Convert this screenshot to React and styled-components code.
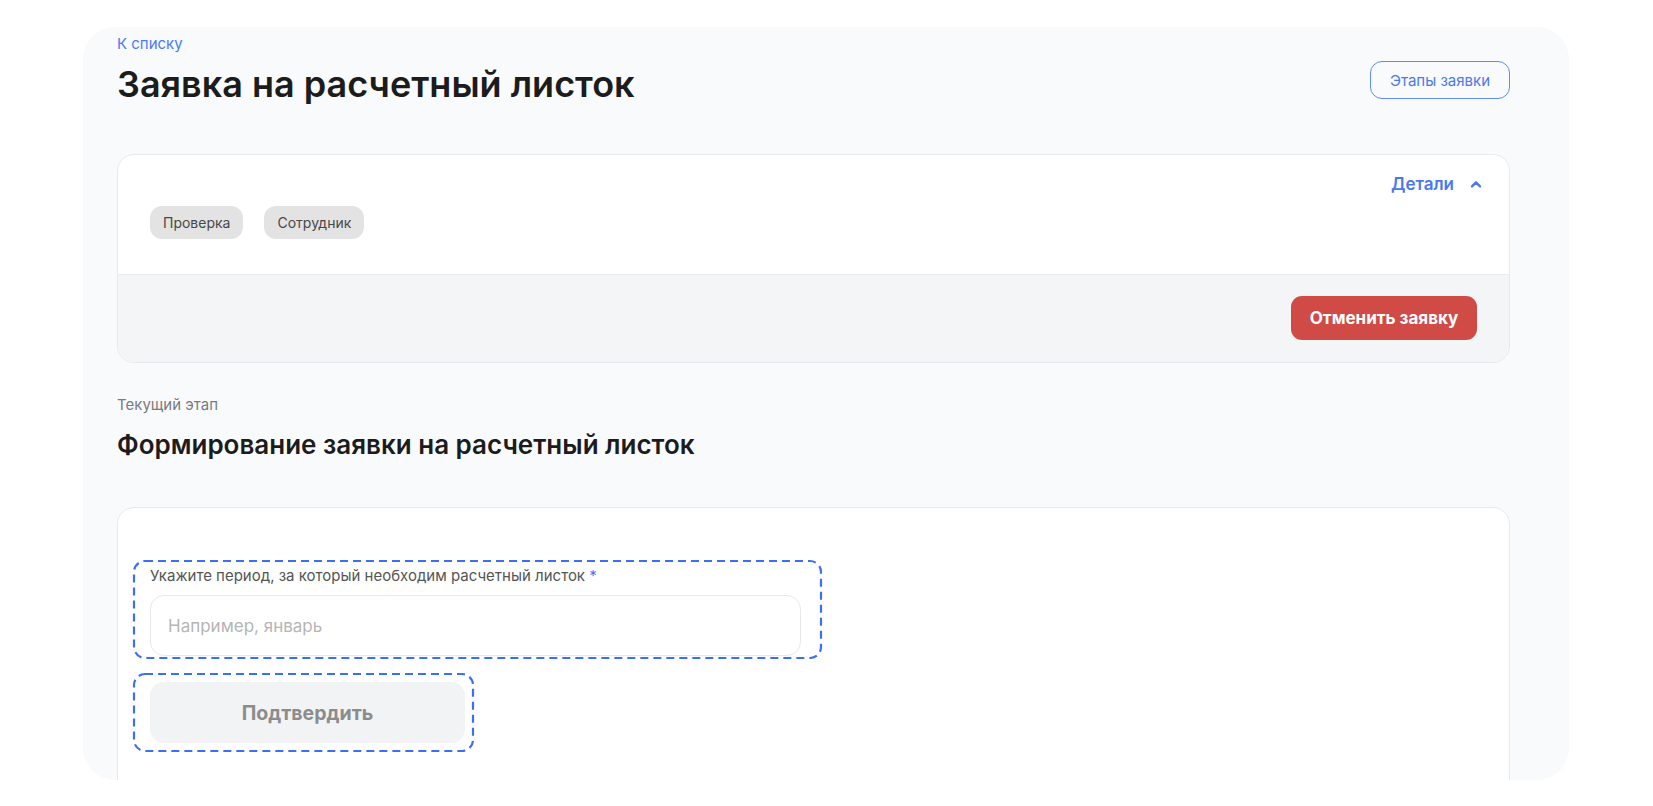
import React from "react";
import styled, { createGlobalStyle } from "styled-components";

const Global = createGlobalStyle`
  html, body { margin: 0; padding: 0; background: #ffffff; }
  body { font-family: Inter, "Noto Sans", sans-serif; color: #1f1f1f; }
  * { box-sizing: border-box; }
`;

const Page = styled.div`
  padding: 27px 84px 0 83px;
  height: 806px;
  overflow: hidden;
`;

const Panel = styled.div`
  height: 753px;
  background: #f9fafb;
  border-radius: 32px;
  overflow: hidden;
  padding: 8px 59px 0 34px;
  display: flex;
  flex-direction: column;
`;

const Header = styled.div`
  display: flex;
  justify-content: space-between;
  align-items: flex-start;
`;

const HeaderText = styled.div`
  display: flex;
  flex-direction: column;
`;

const BackLink = styled.a`
  font-size: 15px;
  line-height: 18px;
  color: #4a7af5;
  text-decoration: none;
`;

const Title = styled.h1`
  margin: 10px 0 0;
  font-size: 36px;
  line-height: 42px;
  font-weight: 600;
  color: #1c1c1c;
`;

const OutlineButton = styled.button`
  margin-top: 26px;
  width: 140px;
  height: 38px;
  border: 1.5px solid #5f8af6;
  border-radius: 12px;
  background: transparent;
  color: #4a78f0;
  font-family: inherit;
  font-size: 15px;
`;

const Card = styled.div`
  margin-top: ${(p) => p.$top}px;
  background: #ffffff;
  border: 1px solid #e8e9ec;
  border-radius: 17px;
  overflow: hidden;
  flex-shrink: 0;
  ${(p) => (p.$tall ? "min-height: 400px;" : "")}
  ${(p) => (p.$tall ? "padding: 52px 16px 0 15px;" : "")}
`;

const CardTop = styled.div`
  padding: 17px 27px 35px 32px;
  display: flex;
  flex-direction: column;
`;

const DetailsRow = styled.div`
  display: flex;
  justify-content: flex-end;
  align-items: center;
  gap: 16px;
  height: 24px;
  color: #4a78f0;
  font-size: 17px;
  font-weight: 600;
`;

const Tags = styled.div`
  margin-top: 10px;
  display: flex;
  gap: 21px;
`;

const Tag = styled.span`
  height: 33px;
  padding: 0 13px;
  display: inline-flex;
  align-items: center;
  background: #e3e3e3;
  border-radius: 12px;
  color: #474747;
  font-size: 14px;
`;

const CardFooter = styled.div`
  border-top: 1px solid #e9eaee;
  background: #f4f5f7;
  padding: 21px 32px 22px;
  display: flex;
  justify-content: flex-end;
`;

const DangerButton = styled.button`
  height: 44px;
  width: 186px;
  border: none;
  border-radius: 11px;
  background: #d04b45;
  color: #ffffff;
  font-family: inherit;
  font-size: 17px;
  font-weight: 700;
`;

const StageLabel = styled.div`
  margin-top: 33px;
  font-size: 15px;
  line-height: 18px;
  color: #7b7b7b;
`;

const StageTitle = styled.h2`
  margin: 14px 0 0;
  font-size: 26px;
  line-height: 34px;
  font-weight: 600;
  color: #1c1c1c;
`;

const DashedFrame = styled.div`
  position: relative;
  width: ${(p) => p.$w}px;
  padding: ${(p) => p.$pad};
  margin-top: ${(p) => p.$mt || 0}px;
`;

const DashSvg = styled.svg`
  position: absolute;
  top: 1px;
  left: 1px;
  width: calc(100% - 2px);
  height: calc(100% - 2px);
  overflow: visible;
  pointer-events: none;
`;

const FieldLabel = styled.label`
  display: block;
  font-size: 15px;
  line-height: 18px;
  color: #555555;
  span { color: #4a78f0; }
`;

const Input = styled.input`
  margin-top: 10px;
  width: 651px;
  height: 61px;
  border: 1px solid #e8e8ea;
  border-radius: 14px;
  padding: 0 17px;
  font-family: inherit;
  font-size: 17px;
  background: #ffffff;
  outline: none;
  &::placeholder { color: #b5b5b5; }
`;

const SubmitButton = styled.button`
  width: 315px;
  height: 61px;
  border: none;
  border-radius: 14px;
  background: #f2f3f5;
  color: #8c8c8c;
  font-family: inherit;
  font-size: 19.5px;
  font-weight: 700;
`;

const Chevron = () => (
  <svg width="12" height="8" viewBox="0 0 12 8" fill="none">
    <path d="M2 6.3L6 2.3L10 6.3" stroke="#4a78f0" strokeWidth="2.4" strokeLinecap="round" strokeLinejoin="round" />
  </svg>
);

const Dashes = () => (
  <DashSvg>
    <rect
      x="0"
      y="0"
      width="100%"
      height="100%"
      rx="11"
      ry="11"
      fill="none"
      stroke="#3d6ff2"
      strokeWidth="2.2"
      strokeDasharray="8 5"
    />
  </DashSvg>
);

export default function App() {
  return (
    <>
      <Global />
      <Page>
        <Panel>
          <Header>
            <HeaderText>
              <BackLink href="#">К списку</BackLink>
              <Title>Заявка на расчетный листок</Title>
            </HeaderText>
            <OutlineButton>Этапы заявки</OutlineButton>
          </Header>

          <Card $top={49}>
            <CardTop>
              <DetailsRow>
                Детали
                <Chevron />
              </DetailsRow>
              <Tags>
                <Tag>Проверка</Tag>
                <Tag>Сотрудник</Tag>
              </Tags>
            </CardTop>
            <CardFooter>
              <DangerButton>Отменить заявку</DangerButton>
            </CardFooter>
          </Card>

          <StageLabel>Текущий этап</StageLabel>
          <StageTitle>Формирование заявки на расчетный листок</StageTitle>

          <Card $top={45} $tall>
            <DashedFrame $w={689} $pad="7px 21px 3px 17px">
              <Dashes />
              <FieldLabel>
                Укажите период, за который необходим расчетный листок <span>*</span>
              </FieldLabel>
              <Input placeholder="Например, январь" />
            </DashedFrame>
            <DashedFrame $w={341} $pad="9px 9px 9px 17px" $mt={14}>
              <Dashes />
              <SubmitButton>Подтвердить</SubmitButton>
            </DashedFrame>
          </Card>
        </Panel>
      </Page>
    </>
  );
}
